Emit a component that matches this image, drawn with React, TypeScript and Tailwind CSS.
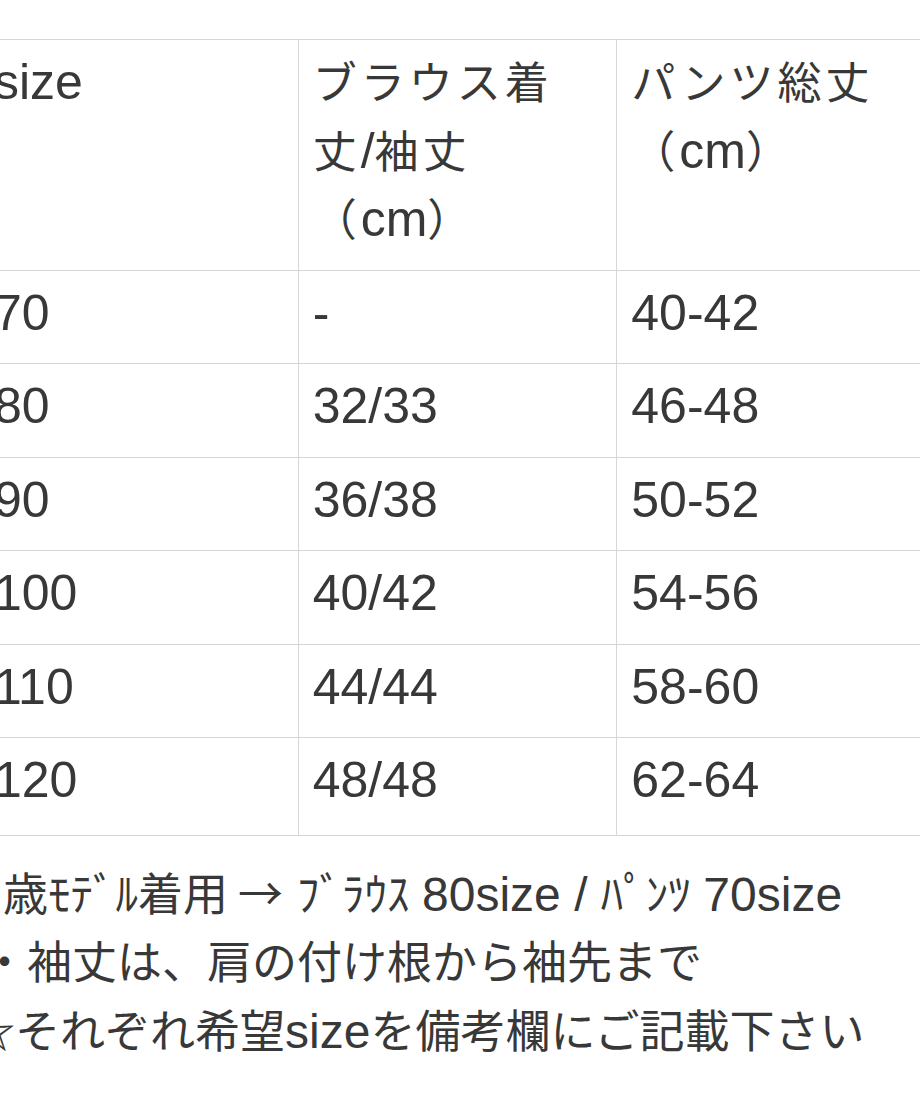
const rows = [
  ["70", "-", "40-42"],
  ["80", "32/33", "46-48"],
  ["90", "36/38", "50-52"],
  ["100", "40/42", "54-56"],
  ["110", "44/44", "58-60"],
  ["120", "48/48", "62-64"],
];

function Jp({ children }: { children: React.ReactNode }) {
  return <span className="text-[44px] tracking-[4px]">{children}</span>;
}

function Cell({ children, pb = "row" }: { children: React.ReactNode; pb?: "head" | "row" | "last" }) {
  const cls =
    pb === "head"
      ? "border border-[#d6d6d6] pl-[14px] pr-[18px] pt-[9px] pb-[15px] align-top text-left"
      : pb === "last"
      ? "border border-[#d6d6d6] pl-[14px] pr-[18px] pt-[9px] pb-[20px] align-top text-left"
      : "border border-[#d6d6d6] pl-[14px] pr-[18px] pt-[9px] pb-[16px] align-top text-left";
  return <td className={cls}>{children}</td>;
}

export default function App() {
  return (
    <div
      className="w-[920px] h-[1104px] overflow-hidden bg-white text-[#383838]"
      style={{ fontFamily: '"Liberation Sans", "Noto Sans CJK JP", sans-serif' }}
    >
      {/* size table, cropped on the left and right edges */}
      <div className="pt-[39px]">
        <table className="ml-[-21px] w-[957px] table-fixed border-collapse text-[50px] leading-[67.5px]">
          <thead>
            <tr>
              <Cell pb="head">size</Cell>
              <Cell pb="head">
                <Jp>ブラウス着丈</Jp>/<Jp>袖丈（</Jp>cm<Jp>）</Jp>
              </Cell>
              <Cell pb="head">
                <Jp>パンツ総丈（</Jp>cm<Jp>）</Jp>
              </Cell>
            </tr>
          </thead>
          <tbody>
            {rows.map((r, i) => {
              const pb = i === rows.length - 1 ? "last" : "row";
              return (
                <tr key={r[0]}>
                  <Cell pb={pb}>{r[0]}</Cell>
                  <Cell pb={pb}>{r[1]}</Cell>
                  <Cell pb={pb}>{r[2]}</Cell>
                </tr>
              );
            })}
          </tbody>
        </table>
      </div>

      {/* notes under the table */}
      <div className="mt-[22px] text-[45px] leading-[68px] whitespace-nowrap">
        <p className="ml-[3px]">
          歳ﾓﾃﾞﾙ着用
          <span className="ml-[10px] mr-[14px]" style={{ fontFamily: '"Noto Sans CJK JP", sans-serif' }}>
            →
          </span>
          ﾌﾞﾗｳｽ <span className="text-[48px]">80size / </span>ﾊﾟﾝﾂ <span className="text-[48px]">70size</span>
        </p>
        <p className="ml-[-18px]">・袖丈は、肩の付け根から袖先まで</p>
        <p className="ml-[-30px]">
          ☆それぞれ希望<span className="text-[48px]">size</span>を備考欄にご記載下さい
        </p>
      </div>
    </div>
  );
}
